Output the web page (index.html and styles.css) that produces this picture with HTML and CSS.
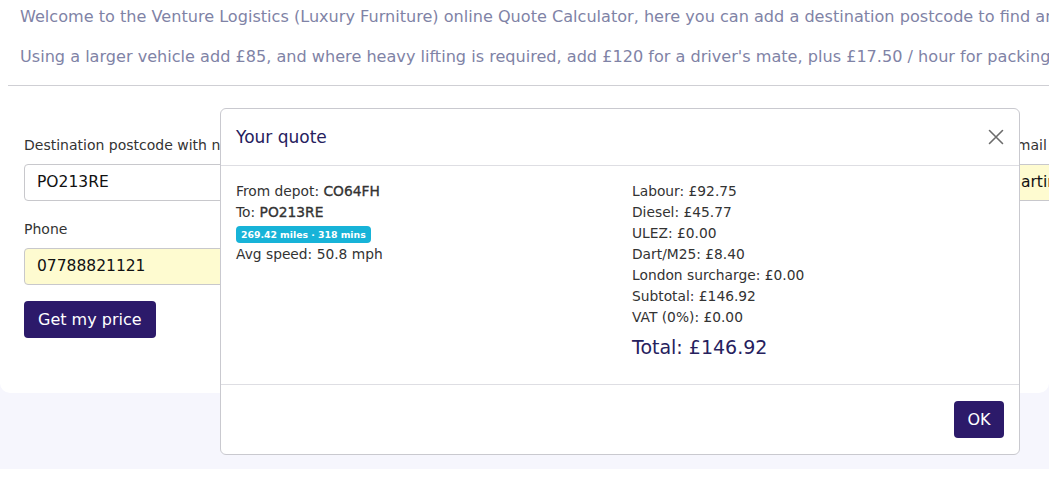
FILE: index.html
```html
<!DOCTYPE html>
<html lang="en">
<head>
<meta charset="utf-8">
<title>Quote Calculator</title>
<link rel="stylesheet" href="styles.css">
</head>
<body>
<div class="intro">
  <p>Welcome to the Venture Logistics (Luxury Furniture) online Quote Calculator, here you can add a destination postcode to find an instant price for your delivery.</p>
  <p>Using a larger vehicle add £85, and where heavy lifting is required, add £120 for a driver's mate, plus £17.50 / hour for packing and wrapping.</p>
</div>
<hr class="rule">
<section class="band">
  <div class="card">
    <form class="form-grid">
      <div class="col">
        <div class="field">
          <label class="label">Destination postcode with no spaces</label>
          <div class="input">PO213RE</div>
        </div>
        <div class="field">
          <label class="label">Phone</label>
          <div class="input filled">07788821121</div>
        </div>
        <button type="button" class="btn">Get my price</button>
      </div>
      <div class="col">
        <div class="field">
          <label class="label">Email</label>
          <div class="input filled">artin@example.com</div>
        </div>
      </div>
    </form>
  </div>
</section>

<div class="modal">
  <div class="modal-header">
    <h5 class="modal-title">Your quote</h5>
    <span class="close" aria-label="Close">
      <svg width="16" height="16" viewBox="0 0 16 16"><path d="M1.5 1.5 L14.5 14.5 M14.5 1.5 L1.5 14.5" stroke="#6c6c6c" stroke-width="1.6" fill="none" stroke-linecap="round"/></svg>
    </span>
  </div>
  <div class="modal-body">
    <div class="mcol">
      <div class="line">From depot: <strong>CO64FH</strong></div>
      <div class="line">To: <strong>PO213RE</strong></div>
      <div class="line"><span class="badge">269.42 miles · 318 mins</span></div>
      <div class="line">Avg speed: 50.8 mph</div>
    </div>
    <div class="mcol">
      <div class="line">Labour: £92.75</div>
      <div class="line">Diesel: £45.77</div>
      <div class="line">ULEZ: £0.00</div>
      <div class="line">Dart/M25: £8.40</div>
      <div class="line">London surcharge: £0.00</div>
      <div class="line">Subtotal: £146.92</div>
      <div class="line">VAT (0%): £0.00</div>
      <div class="total">Total: £146.92</div>
    </div>
  </div>
  <div class="modal-footer">
    <button type="button" class="btn ok">OK</button>
  </div>
</div>
</body>
</html>
```

FILE: styles.css
```css
html, body {
  margin: 0;
  padding: 0;
  overflow: hidden;
  background: #ffffff;
}
body {
  font-family: "DejaVu Sans", "Noto Sans", sans-serif;
  color: #333333;
  position: relative;
  width: 1049px;
  height: 493px;
}
.intro {
  padding: 5px 0 0 20px;
  white-space: nowrap;
}
.intro p {
  margin: 0 0 16px 0;
  font-size: 16.1px;
  line-height: 24px;
  color: #7f83a6;
}
.rule {
  margin: 1px 0 0 8px;
  border: 0;
  border-top: 1px solid #cfcfd4;
  height: 0;
}
.band {
  background: #f6f6fd;
  padding-bottom: 76px;
}
.card {
  background: #ffffff;
  border-radius: 0 0 10px 10px;
  padding: 49px 0 55px 24px;
}
.form-grid {
  display: grid;
  grid-template-columns: 960px 960px;
  column-gap: 24px;
  margin: 0;
}
.field {
  margin-bottom: 18px;
}
.label {
  display: block;
  font-size: 14px;
  line-height: 20px;
  margin-bottom: 9px;
  color: #333;
  white-space: nowrap;
}
.input {
  box-sizing: border-box;
  height: 37px;
  border: 1px solid #c8c8cc;
  border-radius: 4px;
  padding: 0 12px;
  font-size: 15.5px;
  line-height: 35px;
  color: #111;
  background: #fff;
  white-space: nowrap;
  overflow: hidden;
}
.input.filled {
  background: #fefbd0;
}
.col .btn { margin-top: -2px; }
.btn {
  font-family: inherit;
  background: #2c1a6a;
  color: #ffffff;
  border: 0;
  border-radius: 4px;
  font-size: 16px;
  height: 37px;
  padding: 0 14px;
  cursor: pointer;
}

.modal {
  position: absolute;
  left: 220px;
  top: 108px;
  width: 800px;
  box-sizing: border-box;
  background: #ffffff;
  border: 1px solid #c9c9cf;
  border-radius: 6px;
}
.modal-header {
  display: flex;
  align-items: center;
  justify-content: space-between;
  height: 56px;
  padding: 0 15px;
  border-bottom: 1px solid #dedee3;
}
.modal-title {
  margin: 0;
  font-size: 17px;
  font-weight: normal;
  color: #26215e;
}
.close {
  display: flex;
}
.modal-body {
  display: grid;
  grid-template-columns: 1fr 1fr;
  column-gap: 24px;
  padding: 15px 15px 24px 15px;
  font-size: 13.8px;
}
.line {
  line-height: 21px;
  white-space: nowrap;
}
.line strong {
  font-weight: normal;
  -webkit-text-stroke: 0.35px #333;
}
.badge {
  display: inline-block;
  background: #17b3d8;
  color: #ffffff;
  font-weight: bold;
  font-size: 9.3px;
  line-height: 17px;
  padding: 0 5px;
  border-radius: 4px;
  vertical-align: middle;
}
.total {
  margin-top: 6px;
  font-size: 19px;
  line-height: 26px;
  color: #26215e;
}
.modal-footer {
  display: flex;
  justify-content: flex-end;
  border-top: 1px solid #dedee3;
  padding: 16px 15px 16px 15px;
}
.btn.ok {
  width: 50px;
  padding: 0;
}
```
